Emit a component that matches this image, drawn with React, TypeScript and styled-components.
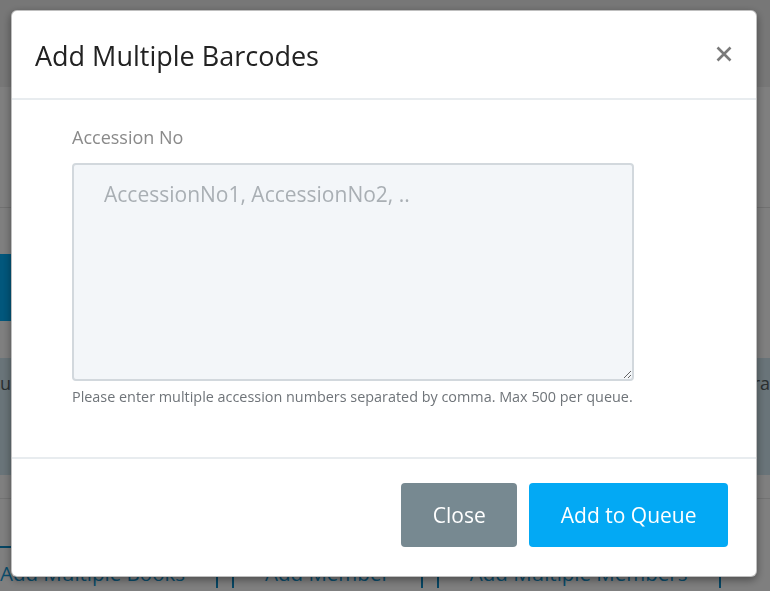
import React from 'react';
import styled, { createGlobalStyle } from 'styled-components';

const GlobalStyle = createGlobalStyle`
  html, body {
    margin: 0;
    padding: 0;
    background: #ffffff;
    font-family: "Open Sans", "Noto Sans", Arial, sans-serif;
    overflow: hidden;
  }
  * {
    box-sizing: border-box;
  }
`;

/* page under the dialog */

const Page = styled.div`
  width: 770px;
  height: 591px;
  overflow: hidden;
  display: flex;
  flex-direction: column;
`;

const TopBar = styled.div`
  height: 87px;
  flex-shrink: 0;
  background: #eeeeee;
`;

const PageHeader = styled.div`
  height: 121px;
  flex-shrink: 0;
  background: #fefefe;
  border-bottom: 1px solid #e2e2e2;
`;

const Spacer = styled.div<{ $h: number }>`
  height: ${p => p.$h}px;
  flex-shrink: 0;
`;

const ScanTab = styled.div`
  width: 220px;
  height: 67px;
  flex-shrink: 0;
  background: #04aef8;
`;

const InfoAlert = styled.div`
  height: 117px;
  flex-shrink: 0;
  background: #d3e9f2;
  color: #555f63;
  font-size: 18px;
  line-height: 24px;
  padding-top: 13px;
  display: flex;
  justify-content: space-between;
`;

const Rule = styled.div`
  height: 24px;
  flex-shrink: 0;
  border-bottom: 1px solid #e6e6e6;
`;

const LinkRow = styled.div`
  display: flex;
  gap: 14px;
  margin-left: -33px;
`;

const LinkBox = styled.a`
  display: block;
  padding: 10px 31px 0;
  border: 2px solid #0b8dc8;
  border-bottom: none;
  color: #149ad8;
  font-size: 20.5px;
  line-height: 30px;
  white-space: nowrap;
  text-decoration: none;
`;

/* dialog */

const Backdrop = styled.div`
  position: fixed;
  inset: 0;
  background: rgba(0, 0, 0, 0.5);
  padding-top: 10px;
`;

const Dialog = styled.div`
  width: 746px;
  margin-left: 11px;
  background: #ffffff;
  border: 1px solid rgba(0, 0, 0, 0.25);
  border-radius: 6px;
  box-shadow: 0 3px 9px rgba(0, 0, 0, 0.4);
`;

const DialogHeader = styled.div`
  height: 89px;
  display: flex;
  align-items: center;
  justify-content: space-between;
  padding: 1px 24px 0 23px;
  border-bottom: 2px solid #e8ecef;
`;

const Title = styled.h4`
  margin: 0;
  font-size: 27px;
  font-weight: 400;
  color: #222222;
`;

const CloseX = styled.button`
  border: none;
  background: none;
  padding: 0;
  width: 16px;
  height: 16px;
  display: flex;
  cursor: pointer;
  margin-top: -2px;
`;

const DialogBody = styled.div`
  padding: 25px 122px 50px 60px;
`;

const Label = styled.label`
  display: block;
  font-size: 18px;
  line-height: 24px;
  color: #8a8a8a;
  margin-bottom: 14px;
`;

const AccessionInput = styled.textarea`
  display: block;
  width: 562px;
  height: 218px;
  margin: 0;
  padding: 14px 30px;
  background: #f3f6f9;
  border: 2px solid #d2d8dd;
  border-radius: 4px;
  font-family: "Open Sans", "Noto Sans", Arial, sans-serif;
  font-size: 21px;
  line-height: 31px;
  color: #444;
  outline: none;

  &::placeholder {
    color: #a9afb4;
  }
`;

const HelpText = styled.div`
  margin-top: 6px;
  font-size: 14.4px;
  line-height: 20px;
  color: #6f7479;
  white-space: nowrap;
`;

const DialogFooter = styled.div`
  display: flex;
  justify-content: flex-end;
  gap: 12px;
  padding: 24px 28px 29px;
  border-top: 2px solid #e8ecef;
`;

const ActionButton = styled.button<{ $primary?: boolean }>`
  height: 64px;
  padding: 0 31.5px;
  border: none;
  border-radius: 4px;
  background: ${p => (p.$primary ? '#03a9f4' : '#778991')};
  color: #ffffff;
  font-family: "Open Sans", "Noto Sans", Arial, sans-serif;
  font-size: 21px;
  cursor: pointer;
`;

export default function App() {
  return (
    <>
      <GlobalStyle />
      <Page>
        <TopBar />
        <PageHeader />
        <Spacer $h={46} />
        <ScanTab />
        <Spacer $h={37} />
        <InfoAlert>
          <span>ur</span>
          <span>ra</span>
        </InfoAlert>
        <Rule />
        <Spacer $h={47} />
        <LinkRow>
          <LinkBox>Add Multiple Books</LinkBox>
          <LinkBox>Add Member</LinkBox>
          <LinkBox>Add Multiple Members</LinkBox>
        </LinkRow>
      </Page>

      <Backdrop>
        <Dialog role="dialog">
          <DialogHeader>
            <Title>Add Multiple Barcodes</Title>
            <CloseX aria-label="Close">
              <svg width="16" height="16" viewBox="0 0 16 16">
                <path
                  d="M1.5 1.5 L14.5 14.5 M14.5 1.5 L1.5 14.5"
                  stroke="#7a7a7a"
                  strokeWidth="2.6"
                  fill="none"
                />
              </svg>
            </CloseX>
          </DialogHeader>

          <DialogBody>
            <Label>Accession No</Label>
            <AccessionInput placeholder="AccessionNo1, AccessionNo2, .." />
            <HelpText>
              Please enter multiple accession numbers separated by comma. Max 500 per queue.
            </HelpText>
          </DialogBody>

          <DialogFooter>
            <ActionButton>Close</ActionButton>
            <ActionButton $primary>Add to Queue</ActionButton>
          </DialogFooter>
        </Dialog>
      </Backdrop>
    </>
  );
}
